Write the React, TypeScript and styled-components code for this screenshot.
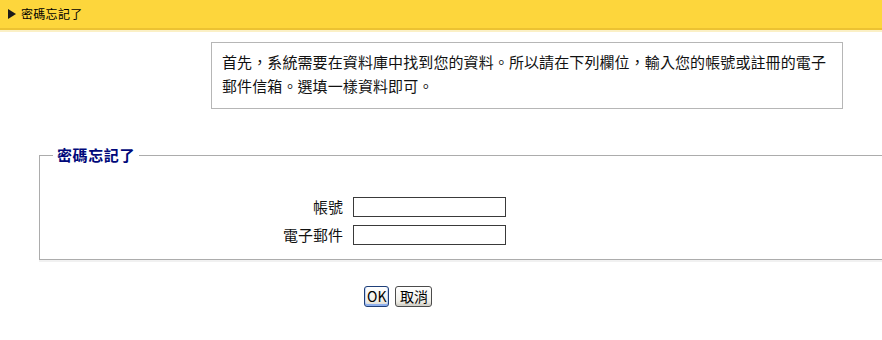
import React from "react";
import styled, { createGlobalStyle } from "styled-components";

const Global = createGlobalStyle`
  html, body { margin: 0; padding: 0; background: #ffffff; overflow: hidden; }
  body { font-family: "Noto Sans CJK TC", "Noto Sans", sans-serif; color: #111; }
`;

const Page = styled.div`
  width: 882px;
  height: 340px;
  display: flex;
  flex-direction: column;
`;

const TitleBar = styled.div`
  height: 28px;
  background: #fdd63c;
  border-bottom: 2px solid #ecc232;
  box-shadow: 0 2px 0 #fbf0c6;
  display: flex;
  align-items: center;
  padding-left: 8px;
  gap: 5px;
  font-size: 12px;
  line-height: 14px;
  letter-spacing: 0.3px;
  color: #000;
`;

const Notice = styled.div`
  margin: 12px 0 0 211px;
  width: 632px;
  box-sizing: border-box;
  border: 1px solid #b6b6b6;
  padding: 7px 10px 10px 10px;
  font-size: 15px;
  line-height: 24px;
  letter-spacing: 0.1px;
  color: #111;
`;

const Group = styled.fieldset`
  margin: 36px 0 0 39px;
  width: 880px;
  box-sizing: border-box;
  padding: 0 0 14px 0;
  border: 1px solid #acacac;
  box-shadow: 0 2px 0 #f1f1f1;
  min-width: 0;
`;

const GroupTitle = styled.legend`
  margin-left: 13px;
  padding: 0 4px;
  font-size: 15px;
  line-height: 20px;
  font-weight: bold;
  letter-spacing: 0.6px;
  color: #00087a;
`;

const FormGrid = styled.div`
  display: grid;
  grid-template-columns: 303px 153px;
  column-gap: 10px;
  row-gap: 8px;
  margin-top: 32px;
  align-items: center;
`;

const Label = styled.label`
  text-align: right;
  font-size: 15px;
  line-height: 20px;
  color: #111;
`;

const Field = styled.input`
  width: 153px;
  height: 20px;
  box-sizing: border-box;
  border: 1px solid #3a3a3a;
  padding: 0 3px;
  margin: 0;
  background: #fff;
  font-size: 13px;
`;

const Actions = styled.div`
  display: flex;
  gap: 6px;
  margin: 26px 0 0 364px;
`;

const Button = styled.button<{ $primary?: boolean }>`
  height: 21px;
  box-sizing: border-box;
  padding: 0 2px;
  margin: 0;
  font-family: "Noto Sans CJK TC", "Noto Sans", sans-serif;
  font-size: 14px;
  line-height: 17px;
  color: #000;
  border-radius: 3px;
  border: 1px solid ${(p) => (p.$primary ? "#1f3f78" : "#4b4b4b")};
  background: linear-gradient(#ffffff, #f1f0ea 70%, #d8d6cc);
  box-shadow: ${(p) =>
    p.$primary
      ? "inset 0 -2px 0 #8fb0ee, inset 1px 0 0 #c4d6f7, inset -1px 0 0 #c4d6f7"
      : "inset 0 -2px 0 #d5d3cb"};
  min-width: ${(p) => (p.$primary ? "25px" : "37px")};
`;

function Arrow() {
  return (
    <svg width="8" height="10" viewBox="0 0 8 10">
      <polygon points="0,0 8,5 0,10" fill="#1a1a1a" />
    </svg>
  );
}

export default function App() {
  return (
    <>
      <Global />
      <Page>
        <TitleBar>
          <Arrow />
          <span>密碼忘記了</span>
        </TitleBar>
        <Notice>
          首先，系統需要在資料庫中找到您的資料。所以請在下列欄位，輸入您的帳號或註冊的電子郵件信箱。選填一樣資料即可。
        </Notice>
        <Group>
          <GroupTitle>密碼忘記了</GroupTitle>
          <FormGrid>
            <Label htmlFor="acct">帳號</Label>
            <Field id="acct" type="text" />
            <Label htmlFor="mail">電子郵件</Label>
            <Field id="mail" type="text" />
          </FormGrid>
        </Group>
        <Actions>
          <Button $primary>OK</Button>
          <Button>取消</Button>
        </Actions>
      </Page>
    </>
  );
}
